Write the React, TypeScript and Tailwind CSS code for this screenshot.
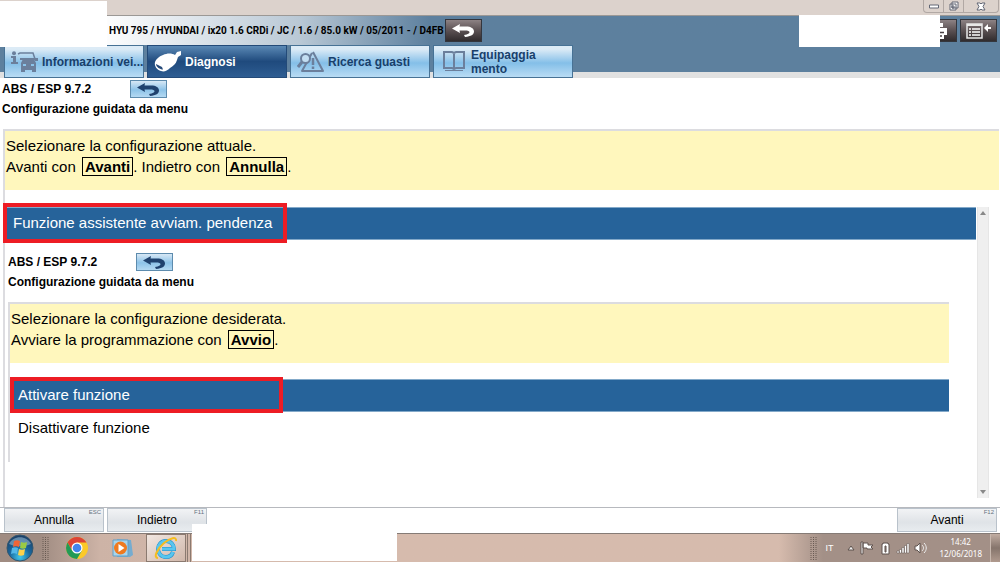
import type { ReactNode } from "react";

type Tab = { label: string; icon: ReactNode; active?: boolean };

function CarInfoIcon() {
  return (
    <svg width="28" height="22" viewBox="0 0 28 22" fill="#6b7f9c">
      <circle cx="3" cy="2.300" r="2" />
      <path d="M0 5h5v6h2v2H0v-2h2V7H0z" />
      <path d="M7 3l2-1h13l2 6" fill="none" stroke="#6b7f9c" strokeWidth="1.500" />
      <path d="M9 7h15v2H9zM24 7h3v3h-3z" />
      <path
        fillRule="evenodd"
        d="M12 8h11l2 4v9h-4v-2h-7v2h-4v-9zM12 13v2h3v-2zM20 13v2h3v-2z"
      />
    </svg>
  );
}

function PlugIcon() {
  return (
    <svg width="28" height="21" viewBox="0 0 28 21">
      <path
        d="M1 11C2 8 6 5 9 4c4-2 9-2 12 0l2-3 4-1v4l-3 2-1 3c-1 4-4 6-7 8-3 3-6 4-9 3C3 19 0 15 1 11z"
        fill="#fff"
      />
      <path d="M2 13l6 3 1 2.500C6 18.500 2 16 2 13z" fill="#274b7a" />
    </svg>
  );
}

function FaultIcon() {
  return (
    <svg width="28" height="22" viewBox="0 0 28 22" fill="none" stroke="#6b7f9c">
      <path d="M15 2L5 20h21L16 1" strokeWidth="2" strokeLinejoin="round" />
      <circle cx="8.500" cy="7.500" r="4.500" strokeWidth="2" fill="#c3def2" />
      <path d="M5 11l-4 5" strokeWidth="3" />
      <path d="M16 7v7M16 15.500v2.500" strokeWidth="2.500" />
    </svg>
  );
}

function BookIcon() {
  return (
    <svg width="22" height="21" viewBox="0 0 22 21" fill="none" stroke="#6b7f9c">
      <path d="M1 1h8l2 1 2-1h8v16h-8l-2 1-2-1H1zM11 2v16" strokeWidth="2" />
      <path d="M2 19.500h18" strokeWidth="1" />
    </svg>
  );
}

function BackArrow({ color }: { color: string }) {
  return (
    <svg width="23" height="13" viewBox="0 0 23 13">
      <path
        d="M0 4.500L8 0l-.5 2.500H14c5 0 8 2 8 5 0 3-3 5-9 5.500l-1-2c4-.5 5.500-1.500 5.500-2.700C17.500 7 16 6.500 13 6.500H7.500L8 9z"
        fill={color}
      />
    </svg>
  );
}

function PrinterIcon() {
  return (
    <svg width="19" height="18" viewBox="0 0 19 18">
      <path d="M5 1h9v4H5zM1 6h17v7h-3v4H5v-4H1z" fill="#fff" />
      <path d="M5 10.500h10M8 14h5" stroke="#4a4245" strokeWidth="1.500" />
    </svg>
  );
}

function MenuListIcon() {
  return (
    <svg width="26" height="16" viewBox="0 0 26 16">
      <path d="M1 1h15v14H1z" fill="none" stroke="#e8e8e8" strokeWidth="1.500" />
      <path d="M1 2h15" stroke="#e8e8e8" strokeWidth="2" />
      <path d="M3 6h2M6 6h8M3 9h2M6 9h8M3 12h2M6 12h8" stroke="#fff" strokeWidth="1.300" />
      <path d="M18 5l4-4v3h3v2h-3v3z" fill="#fff" />
    </svg>
  );
}

const TABS: Tab[] = [
  { label: "Informazioni vei...", icon: <CarInfoIcon /> },
  { label: "Diagnosi", icon: <PlugIcon />, active: true },
  { label: "Ricerca guasti", icon: <FaultIcon /> },
  { label: "Equipaggia mento", icon: <BookIcon /> },
];

function TitleBar() {
  return (
    <div className="flex h-4 justify-end border-b border-[#9b9895] bg-[#dcd2cc] pr-px">
      <div className="flex h-[13px] w-[76px] rounded-b border border-t-0 border-[#b1a8a4]">
        <button aria-label="Minimizza" className="flex flex-1 items-center justify-center border-r border-[#b1a8a4]">
          <svg width="10" height="5" viewBox="0 0 10 5">
            <path d="M.5 1h9v3h-9z" fill="#fff" stroke="#626775" />
          </svg>
        </button>
        <button aria-label="Ripristina" className="flex flex-1 items-center justify-center border-r border-[#b1a8a4]">
          <svg width="10" height="10" viewBox="0 0 10 10" fill="#f6f6f6" stroke="#626775">
            <path d="M3 1h6v6H3zM1 3h6v6H1zM3 5h2v2H3z" />
          </svg>
        </button>
        <button aria-label="Chiudi" className="flex w-[34px] items-center justify-center">
          <svg width="10" height="9" viewBox="0 0 10 9">
            <path d="M1 1h3l1 1 1-1h3L7 4.500 9 8H6L5 7 4 8H1l2-3.500z" fill="#fff" stroke="#626775" />
          </svg>
        </button>
      </div>
    </div>
  );
}

function DarkButton({ label, children }: { label: string; children: ReactNode }) {
  return (
    <button
      aria-label={label}
      className="flex h-[23px] w-[37px] items-center justify-center border border-[#34363d] bg-linear-to-b from-[#8d8284] via-[#5b5153] via-50% to-[#312c2e]">
      {children}
    </button>
  );
}

function Header() {
  return (
    <header className="relative border-b-[6px] border-[#e1e1e1] bg-[#5d809e]">
      <div className="flex h-[29px] items-center justify-between bg-linear-to-r from-white from-10% via-[#b9c8d5] via-30% to-[#5d809e] to-43% pr-[3px] pl-[109px]">
        <div className="flex items-center">
          <p className="w-[336px] font-['Roboto',sans-serif] text-[10px] font-bold whitespace-nowrap">
            HYU 795 / HYUNDAI / ix20 1.6 CRDi / JC / 1.6 / 85.0 kW / 05/2011 - / D4FB
          </p>
          <DarkButton label="Indietro">
            <BackArrow color="#fff" />
          </DarkButton>
        </div>
        <div className="flex gap-[3px]">
          <DarkButton label="Stampa">
            <PrinterIcon />
          </DarkButton>
          <DarkButton label="Menu">
            <MenuListIcon />
          </DarkButton>
        </div>
      </div>
      <nav className="-mb-[6px] flex gap-[3px] pl-1">
        {TABS.map((tab) => (
          <button
            key={tab.label}
            className={`flex h-[33px] w-[140px] items-center gap-[3px] border pl-[6px] text-left text-xs leading-[14px] font-bold ${
              tab.active
                ? "border-[#234a78] bg-linear-to-b from-[#5b89b5] via-[#1f4a7d] via-50% to-[#2e5d92] text-white"
                : "border-[#477295] bg-linear-to-b from-[#dcebf6] from-10% via-[#84bfe8] via-55% to-[#b9dcf4] text-[#183f6b]"
            }`}>
            <span className="flex w-7 shrink-0 justify-center">{tab.icon}</span>
            <span className={tab.label.startsWith("Info") ? "whitespace-nowrap" : "w-[88px]"}>
              {tab.label}
            </span>
          </button>
        ))}
      </nav>
      <div className="absolute -top-px right-[60px] h-8 w-[141px] bg-white" />
    </header>
  );
}

function SectionTitle() {
  return (
    <div className="text-xs font-bold">
      <div className="flex h-5 items-center">
        <h1 className="w-32">ABS / ESP 9.7.2</h1>
        <button
          aria-label="Torna indietro"
          className="flex h-[18px] w-[37px] items-center justify-center border border-[#5d8bad] bg-linear-to-b from-[#d7e8f5] via-[#8dc3e8] via-55% to-[#b4d9f2]">
          <BackArrow color="#20426e" />
        </button>
      </div>
      <h2 className="h-5 leading-5">Configurazione guidata da menu</h2>
    </div>
  );
}

function Key({ children }: { children: ReactNode }) {
  return <b className="ml-[2px] border border-black px-[2px]">{children}</b>;
}

function Message({ children }: { children: ReactNode }) {
  return (
    <div className="h-[61px] border-t-2 border-[#dcdce0] bg-[#fff7bd] pt-1 pl-px text-[15px] leading-[21px]">
      {children}
    </div>
  );
}

function Option({
  label,
  selected,
  markClass,
}: {
  label: string;
  selected?: boolean;
  markClass?: string;
}) {
  return (
    <button
      className={`relative flex h-[33px] w-full items-center pl-2 text-left text-[15px] ${
        selected ? "border-y border-[#83a9c9] bg-[#26639a] text-white" : ""
      }`}>
      {label}
      {markClass && <span className={`absolute border-4 border-[#ed1c24] ${markClass}`} />}
    </button>
  );
}

function Scrollbar() {
  return (
    <div className="flex w-3 shrink-0 flex-col items-center justify-between border-x border-[#e6e6e6] bg-[#efefef] py-1">
      <svg width="6" height="4" viewBox="0 0 6 4">
        <path d="M0 4l3-4 3 4z" fill="#888" />
      </svg>
      <svg width="6" height="4" viewBox="0 0 6 4">
        <path d="M0 0l3 4 3-4z" fill="#888" />
      </svg>
    </div>
  );
}

function FooterButton({ label, hotkey }: { label: string; hotkey: string }) {
  return (
    <button className="relative h-6 w-[100px] border border-[#b9c2cb] bg-linear-to-b from-[#f2f3f5] via-[#dfe3e7] via-60% to-[#e8ecef] text-xs">
      {label}
      <span className="absolute top-0 right-[2px] text-[6px] leading-[7px] text-[#66727e]">{hotkey}</span>
    </button>
  );
}

function WindowsOrb() {
  return (
    <svg width="28" height="28" viewBox="0 0 28 28">
      <defs>
        <radialGradient id="orb" cx="50%" cy="85%" r="80%">
          <stop offset="0" stopColor="#42c7ea" />
          <stop offset="0.500" stopColor="#19689f" />
          <stop offset="1" stopColor="#1c4068" />
        </radialGradient>
      </defs>
      <circle cx="14" cy="14" r="13" fill="url(#orb)" stroke="#31566f" />
      <path d="M3 10C7 1 21 1 25 10c-7 3-15 3-22 0z" fill="#a9cbe0" opacity="0.500" />
      <path d="M8 7c2-1 4-1 6 0l-1 6c-2-1-4-1-6 0z" fill="#ef6537" />
      <path d="M15 8c2 1 4 1 6 0l-1 6c-2 1-4 1-6 0z" fill="#9bcb43" />
      <path d="M6 14c2-1 4-1 6 0l-1 6c-2-1-4-1-6 0z" fill="#53b7e8" />
      <path d="M13 15c2 1 4 1 6 0l-1 6c-2 1-4 1-6 0z" fill="#fdd24a" />
    </svg>
  );
}

function ChromeIcon() {
  return (
    <svg width="22" height="22" viewBox="0 0 22 22">
      <circle cx="11" cy="11" r="11" fill="#fbc928" />
      <path d="M1.500 5.500A11 11 0 0 1 20.500 5.500H11L6.200 13.700z" fill="#dc4437" />
      <path d="M1.500 5.500A11 11 0 0 0 11 22l4.800-8.300H6.200z" fill="#229a57" />
      <circle cx="11" cy="11" r="5.500" fill="#fff" />
      <circle cx="11" cy="11" r="4.300" fill="#4285ed" />
    </svg>
  );
}

function PlayerIcon() {
  return (
    <svg width="22" height="20" viewBox="0 0 22 20">
      <path d="M5 1l14 1 2 15-3 2H5z" fill="#75acd0" />
      <path d="M1 2h15v16H1z" fill="#a8d5ed" stroke="#659fc6" />
      <circle cx="8.500" cy="10" r="6.500" fill="#ef7a20" />
      <path d="M6.500 6l6 4-6 4z" fill="#fff" />
    </svg>
  );
}

function ExplorerIcon() {
  return (
    <svg width="24" height="24" viewBox="0 0 24 24" fill="none">
      <path d="M19 16c-1 3-4 5-7 5-5 0-8-4-8-8s3-8 8-8 8 4 8 8H8" stroke="#1d8ccb" strokeWidth="4" />
      <path d="M19 16c-1 3-4 5-7 5-5 0-8-4-8-8s3-8 8-8 8 4 8 8H8" stroke="#58c6ef" strokeWidth="3" />
      <path d="M4 22C-1 22 3 13 10 7c6-5 13-7 12-2" stroke="#f4bd20" strokeWidth="2" />
    </svg>
  );
}

function Grip() {
  return (
    <svg width="7" height="23" viewBox="0 0 7 23">
      <path d="M1 0v23M3.500 0v23M6 0v23" stroke="#675951" strokeWidth="1" strokeDasharray="1 1" />
    </svg>
  );
}

function TrayIcons() {
  return (
    <svg width="80" height="14" viewBox="0 0 80 14" stroke="#5f534e" strokeWidth="1">
      <path d="M1 9l3-4 3 4z" fill="#eee" />
      <path d="M14 1h2v12h-2zM16 2h5v2h5l-2 2 2 2h-6V7h-4z" fill="#fff" />
      <path d="M36 2h5v1h1v10h-7V3h1z" fill="#fff" />
      <path d="M38 5h1v6h-1z" fill="#a39087" />
      <path
        d="M50 10h2v2h-2zM52.500 8.500h2V12h-2zM55 6.500h2V12h-2zM57.500 4.500h2V12h-2zM60 2.500h2V12h-2z"
        fill="#fff"
        strokeWidth="0.500"
      />
      <path d="M68 5h2l3-3v10l-3-3h-2z" fill="#fff" />
      <path d="M75 4c2 2 2 4 0 6M77 2c3 3 3 7 0 10" fill="none" stroke="#eee" />
    </svg>
  );
}

function Taskbar() {
  return (
    <div className="flex h-[29px] items-center justify-between border-t border-[#857b76] bg-linear-to-r from-[#a08c82] from-4% via-[#cdb3a6] via-10% to-[#d6bbad] to-30%">
      <div className="flex h-full items-center">
        <button aria-label="Start" className="ml-[6px]">
          <WindowsOrb />
        </button>
        <span className="ml-2">
          <Grip />
        </span>
        <button aria-label="Chrome" className="ml-[17px]">
          <ChromeIcon />
        </button>
        <button aria-label="Media Player" className="ml-6">
          <PlayerIcon />
        </button>
        <button
          aria-label="Internet Explorer"
          className="ml-3 flex h-full w-10 items-center justify-center border border-[#8b7a70] bg-linear-to-br from-[#f1e7e1] to-[#d0b7aa]">
          <ExplorerIcon />
        </button>
        <span className="ml-px h-full w-1 border-x border-[#8b7a70]" />
      </div>
      <div className="flex h-full items-center bg-linear-to-r from-[#d6bbad] to-[#a39087] to-20% pl-[31px] text-white">
        <Grip />
        <span className="ml-2 text-[9px] leading-4">IT</span>
        <span className="ml-[14px]">
          <TrayIcons />
        </span>
        <time className="ml-3 text-center font-['Noto_Sans',sans-serif] text-[8px] leading-3">
          14:42
          <br />
          12/06/2018
        </time>
        <span className="ml-2 h-full w-[10px] border-l border-[#c8b8ae] bg-linear-to-b from-[#c1ada2] via-[#86756c] to-[#b09a8e]" />
      </div>
    </div>
  );
}

export default function App() {
  return (
    <div className="relative flex min-h-screen flex-col bg-white font-['Liberation_Sans',Arial,sans-serif] text-black">
      <TitleBar />
      <Header />
      <div className="absolute top-px left-0 h-[46px] w-[107px] bg-white" />

      <main className="flex flex-1 flex-col pt-px">
        <div className="pl-[2px]">
          <SectionTitle />
        </div>
        <section className="mt-[10px] ml-[3px] flex flex-1 flex-col border-l-2 border-[#dcdce0]">
          <div className="pr-px">
            <Message>
              <p>Selezionare la configurazione attuale.</p>
              <p>
                Avanti con <Key>Avanti</Key>. Indietro con <Key>Annulla</Key>.
              </p>
            </Message>
          </div>
          <div className="mt-[17px] mb-[9px] flex flex-1 pr-[11px]">
            <div className="mr-px flex-1">
              <Option
                label="Funzione assistente avviam. pendenza"
                selected
                markClass="-top-[5px] -left-[2px] h-10 w-[284px]"
              />
              <div className="mt-3 mr-[27px]">
                <div className="pl-[3px]">
                  <SectionTitle />
                </div>
                <section className="mt-[10px] ml-[3px] h-40 border-l-2 border-[#dcdce0]">
                  <Message>
                    <p>Selezionare la configurazione desiderata.</p>
                    <p>
                      Avviare la programmazione con <Key>Avvio</Key>.
                    </p>
                  </Message>
                  <div className="mt-4">
                    <Option
                      label="Attivare funzione"
                      selected
                      markClass="-top-[3px] left-0 h-9 w-[273px]"
                    />
                    <Option label="Disattivare funzione" />
                  </div>
                </section>
              </div>
            </div>
            <Scrollbar />
          </div>
        </section>
      </main>

      <footer className="relative">
        <div className="flex justify-between border-t border-[#b7b9be] pr-[3px] pb-px pl-1">
          <div className="flex gap-[3px]">
            <FooterButton label="Annulla" hotkey="ESC" />
            <FooterButton label="Indietro" hotkey="F11" />
          </div>
          <FooterButton label="Avanti" hotkey="F12" />
        </div>
        <Taskbar />
        <div className="absolute bottom-px left-48 h-[37px] w-[205px] bg-white" />
      </footer>
    </div>
  );
}
